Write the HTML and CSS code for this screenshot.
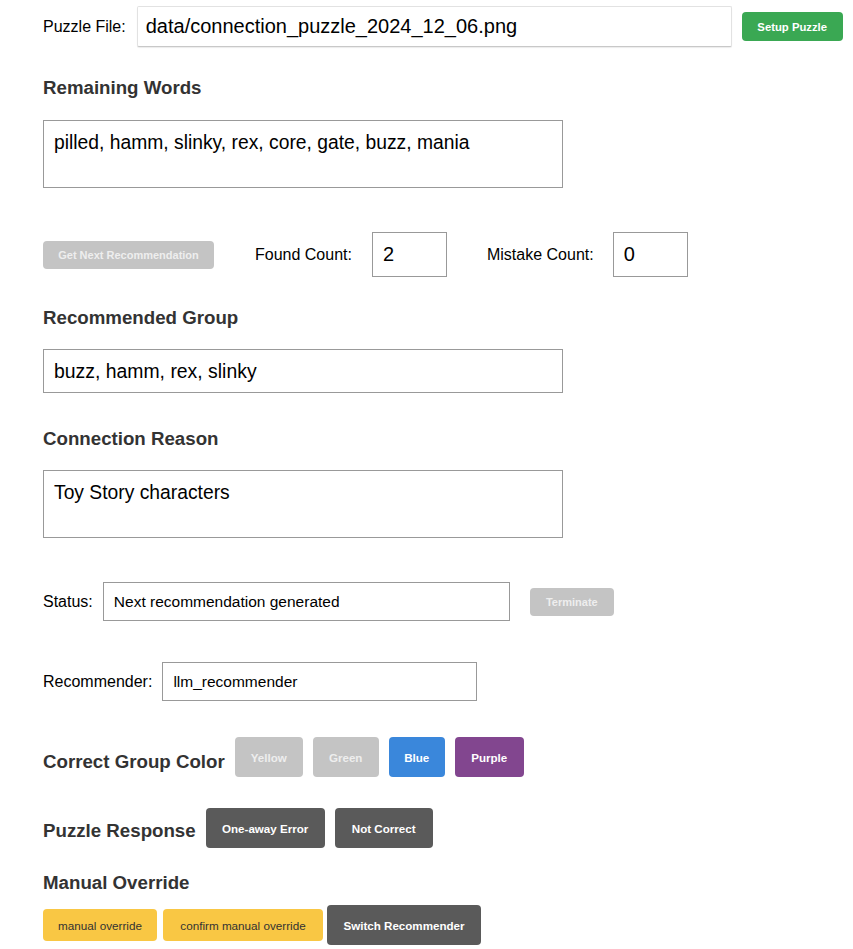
FILE: index.html
```html
<!DOCTYPE html>
<html>
<head>
<meta charset="utf-8">
<link rel="stylesheet" href="styles.css">
</head>
<body>
<div class="page">
  <div class="row row-file">
    <label class="lbl">Puzzle File:</label>
    <input class="inp inp-file" type="text" value="data/connection_puzzle_2024_12_06.png">
    <button class="btn btn-green">Setup Puzzle</button>
  </div>

  <h2 class="heading h-remaining">Remaining Words</h2>
  <div class="area">pilled, hamm, slinky, rex, core, gate, buzz, mania</div>

  <div class="row row-counts">
    <button class="btn btn-disabled btn-next">Get Next Recommendation</button>
    <label class="lbl lbl-found">Found Count:</label>
    <input class="inp inp-count" type="text" value="2">
    <label class="lbl lbl-mistake">Mistake Count:</label>
    <input class="inp inp-count" type="text" value="0">
  </div>

  <h2 class="heading h-group">Recommended Group</h2>
  <input class="inp inp-group" type="text" value="buzz, hamm, rex, slinky">

  <h2 class="heading h-reason">Connection Reason</h2>
  <div class="area area-reason">Toy Story characters</div>

  <div class="row row-status">
    <label class="lbl">Status:</label>
    <input class="inp inp-small inp-status" type="text" value="Next recommendation generated">
    <button class="btn btn-disabled btn-term">Terminate</button>
  </div>

  <div class="row row-rec">
    <label class="lbl">Recommender:</label>
    <input class="inp inp-small inp-rec" type="text" value="llm_recommender">
  </div>

  <div class="row row-color">
    <h2 class="heading heading-inline">Correct Group Color</h2>
    <button class="btn btn-big btn-disabled btn-yel">Yellow</button>
    <button class="btn btn-big btn-disabled btn-grn">Green</button>
    <button class="btn btn-big btn-blue">Blue</button>
    <button class="btn btn-big btn-purple">Purple</button>
  </div>

  <div class="row row-response">
    <h2 class="heading heading-inline">Puzzle Response</h2>
    <button class="btn btn-big btn-dark btn-oneaway">One-away Error</button>
    <button class="btn btn-big btn-dark btn-notcorrect">Not Correct</button>
  </div>

  <h2 class="heading h-manual">Manual Override</h2>
  <div class="row row-manual">
    <button class="btn btn-yellow btn-manual">manual override</button>
    <button class="btn btn-yellow btn-confirm">confirm manual override</button>
    <button class="btn btn-big btn-dark btn-switch">Switch Recommender</button>
  </div>
</div>
</body>
</html>
```

FILE: styles.css
```css
* { box-sizing: border-box; }
html, body {
  margin: 0;
  padding: 0;
  background: #fff;
}
body {
  font-family: "Liberation Sans", Arial, sans-serif;
  color: #000;
}
.page {
  padding: 6px 10px 0 43px;
  width: 853px;
}
.row {
  display: flex;
  align-items: center;
}
.row > * { flex-shrink: 0; }
.lbl {
  font-size: 16px;
  color: #000;
  white-space: nowrap;
}
.inp {
  font-family: "Liberation Sans", Arial, sans-serif;
  font-size: 20px;
  color: #000;
  border: 1px solid #999;
  background: #fff;
  outline: none;
  margin: 0;
  border-radius: 0;
}
.row-file .lbl { margin-right: 11px; }
.inp-file {
  width: 595px;
  height: 41px;
  padding: 0 8px;
  border: 1px solid #e2e2e2;
  border-bottom-color: #c8c8c8;
  box-shadow: 0 1px 1px rgba(0,0,0,0.08);
  border-radius: 2px;
}
.btn {
  font-family: "Liberation Sans", Arial, sans-serif;
  font-weight: bold;
  font-size: 11.3px;
  color: #fff;
  border: none;
  border-radius: 4px;
  padding: 0;
  margin: 0;
  cursor: pointer;
  white-space: nowrap;
}
.btn-green {
  background: #3aa853;
  width: 101px;
  height: 29px;
  margin-left: 10px;
}
.btn-disabled {
  background: #c4c4c4;
  color: #eeeeee;
}
.heading {
  font-size: 18.7px;
  font-weight: bold;
  color: #333;
  margin: 0;
  line-height: 22px;
  white-space: nowrap;
}
.h-remaining { margin-top: 30px; }
.area {
  margin-top: 21px;
  width: 520px;
  height: 68px;
  border: 1px solid #999;
  padding: 11px 10px;
  font-size: 19.3px;
  line-height: 22px;
  color: #000;
}
.area-reason { margin-top: 20px; }
.row-counts { margin-top: 44px; height: 45px; }
.btn-next {
  width: 171px;
  height: 28px;
  margin-right: 41px;
  font-size: 11px;
}
.lbl-found { margin-right: 20px; }
.inp-count {
  width: 75px;
  height: 45px;
  padding: 0 10px;
}
.lbl-mistake { margin-left: 40px; margin-right: 19px; }
.h-group { margin-top: 30px; }
.inp-group {
  display: block;
  margin-top: 20px;
  width: 520px;
  height: 44px;
  padding: 0 10px;
  font-size: 19.4px;
}
.h-reason { margin-top: 35px; }
.row-status { margin-top: 44px; }
.row-status .lbl { margin-right: 10px; }
.inp-small {
  font-size: 15.5px;
  height: 39px;
  padding: 0 10px;
}
.inp-status { width: 407px; }
.btn-term {
  width: 84px;
  height: 28px;
  margin-left: 20px;
  font-size: 11px;
}
.row-rec { margin-top: 41px; }
.row-rec .lbl { margin-right: 10px; }
.inp-rec { width: 315px; }
.row-color { margin-top: 36px; align-items: flex-end; }
.heading-inline {
  margin-right: 10px;
  line-height: 22px;
  margin-bottom: 4px;
}
.btn-big {
  height: 40px;
  font-size: 11.6px;
  padding: 0;
  margin-right: 10px;
}
.btn-yel { width: 68px; }
.btn-grn { width: 66px; }
.btn-blue { background: #3a87db; width: 56px; }
.btn-purple { background: #82468f; width: 69px; }
.btn-dark { background: #5a5a5a; }
.row-response { margin-top: 31px; align-items: flex-end; }
.row-response .heading-inline { margin-right: 10px; margin-bottom: 6px; }
.btn-oneaway { width: 119px; }
.btn-notcorrect { width: 98px; }
.h-manual { margin-top: 24px; }
.row-manual { margin-top: 11px; }
.btn-yellow {
  background: #f9c744;
  color: #333;
  font-weight: normal;
  font-size: 11.7px;
  height: 32px;
  margin-right: 6px;
}
.btn-manual { width: 114px; }
.btn-confirm { width: 160px; margin-right: 4px; }
.btn-switch { width: 154px; }
```
